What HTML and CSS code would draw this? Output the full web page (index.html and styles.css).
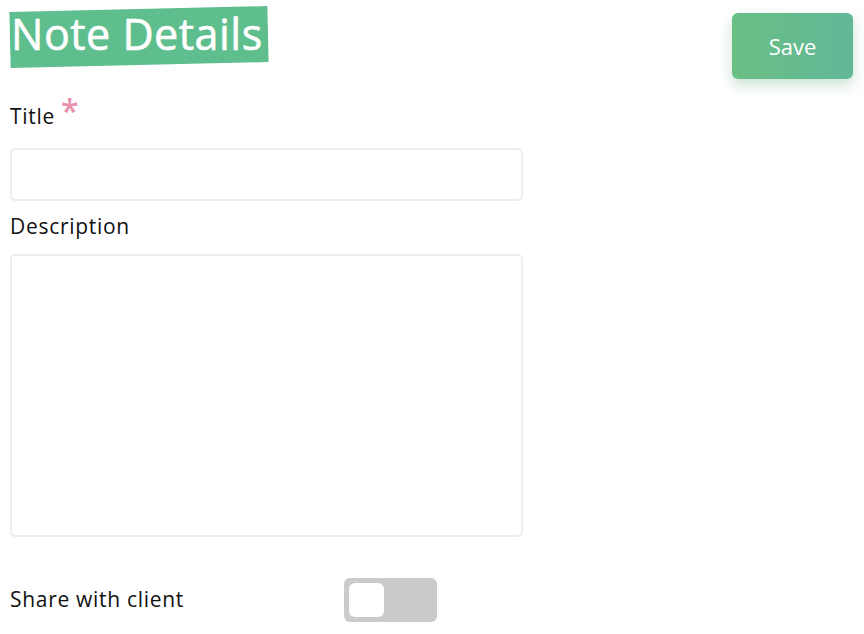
FILE: index.html
```html
<!DOCTYPE html>
<html>
<head>
<meta charset="utf-8">
<link rel="stylesheet" href="styles.css">
</head>
<body>
<div class="page">
  <div class="top">
    <h1 class="heading"><span class="heading-bg"></span><span class="heading-text">Note Details</span></h1>
    <button class="save">Save</button>
  </div>
  <div class="form">
    <label class="label title-label">Title <span class="req">*</span></label>
    <input class="field" type="text">
    <label class="label desc-label">Description</label>
    <textarea class="field area"></textarea>
    <div class="share">
      <span class="label">Share with client</span>
      <span class="toggle"><span class="knob"></span></span>
    </div>
  </div>
</div>
</body>
</html>
```
FILE: styles.css
```css
html, body { margin: 0; padding: 0; background: #fff; }
body { font-family: "Open Sans", Lato, sans-serif; color: #111; }
.page { padding: 0 10px; }
.top { display: flex; justify-content: space-between; align-items: flex-start; height: 79px; }
.heading { position: relative; margin: 9px 0 0 0; height: 56px; width: 258px; font-weight: 400; font-size: 43px; line-height: 50px; white-space: nowrap; }
.heading-bg { position: absolute; left: 0; top: 0; right: 0; bottom: 0; background: #5fbe8e; transform: rotate(-1.3deg); }
.heading-text { position: relative; color: #fff; padding-left: 1px; letter-spacing: 0.5px; -webkit-text-stroke: 0.6px #fff; }
.save { margin: 13px 1px 0 0; width: 121px; height: 66px; border: none; border-radius: 6px; background: linear-gradient(90deg, #6abf84, #61b797); color: #fff; font-family: "Open Sans", sans-serif; font-size: 22px; box-shadow: 0 6px 14px rgba(60,150,100,0.28); }
.form { display: flex; flex-direction: column; width: 513px; }
.label { font-size: 21px; line-height: 24px; color: #111; letter-spacing: 0.7px; }
.title-label { margin-top: 25px; display: flex; align-items: flex-start; gap: 6px; height: 24px; }
.req { color: #e88fae; font-size: 32px; line-height: 30px; margin-top: -8px; font-weight: 600; }
.field { box-sizing: border-box; width: 513px; border: 2px solid #ededed; border-radius: 5px; font-family: inherit; font-size: 18px; outline: none; }
input.field { height: 53px; margin-top: 20px; }
.desc-label { margin-top: 13px; }
textarea.field { height: 283px; margin-top: 16px; resize: none; display: block; }
.share { display: flex; align-items: center; margin-top: 41px; }
.share .label { width: 334px; margin-top: -3px; }
.toggle { width: 93px; height: 44px; background: #cbcbcb; border-radius: 6px; display: flex; align-items: center; padding-left: 5px; box-sizing: border-box; }
.knob { width: 35px; height: 34px; background: #fff; border-radius: 6px; }
```
